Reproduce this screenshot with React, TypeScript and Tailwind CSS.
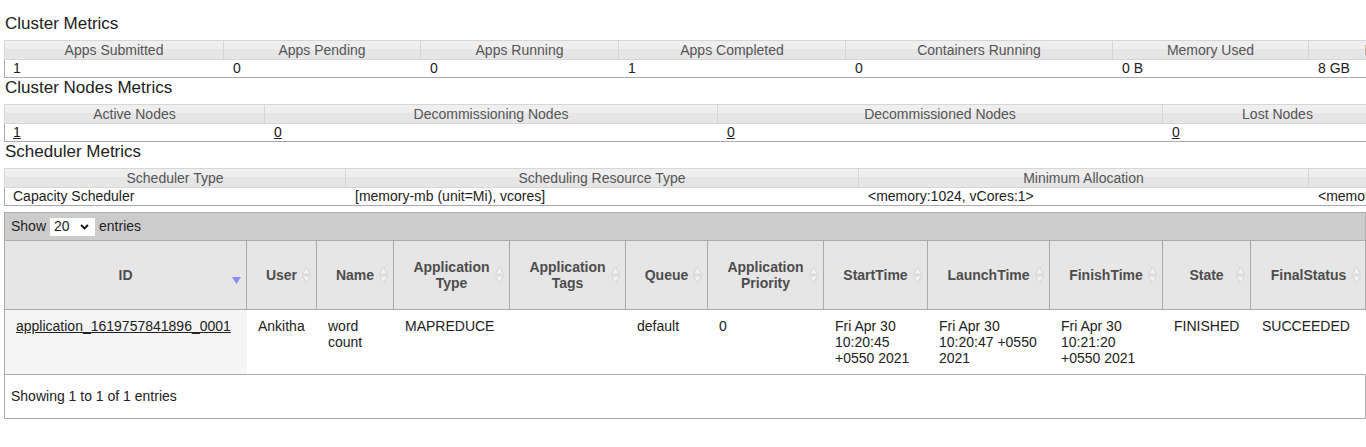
import React from "react";

type Col = { label: string; w: string; value: string; link?: boolean };

const clusterCols: Col[] = [
  { label: "Apps Submitted", w: "w-[220px]", value: "1" },
  { label: "Apps Pending", w: "w-[197px]", value: "0" },
  { label: "Apps Running", w: "w-[198px]", value: "0" },
  { label: "Apps Completed", w: "w-[227px]", value: "1" },
  { label: "Containers Running", w: "w-[267px]", value: "0" },
  { label: "Memory Used", w: "w-[196px]", value: "0 B" },
  { label: "Memory Total", w: "w-[196px]", value: "8 GB" },
  { label: "Memory Reserved", w: "w-[196px]", value: "0 B" },
  { label: "VCores Used", w: "w-[196px]", value: "0" },
];

const nodeCols: Col[] = [
  { label: "Active Nodes", w: "w-[261px]", value: "1", link: true },
  { label: "Decommissioning Nodes", w: "w-[453px]", value: "0", link: true },
  { label: "Decommissioned Nodes", w: "w-[445px]", value: "0", link: true },
  { label: "Lost Nodes", w: "w-[230px]", value: "0", link: true },
  { label: "Unhealthy Nodes", w: "w-[230px]", value: "0", link: true },
];

const schedCols: Col[] = [
  { label: "Scheduler Type", w: "w-[342px]", value: "Capacity Scheduler" },
  { label: "Scheduling Resource Type", w: "w-[513px]", value: "[memory-mb (unit=Mi), vcores]" },
  { label: "Minimum Allocation", w: "w-[450px]", value: "<memory:1024, vCores:1>" },
  { label: "Maximum Allocation", w: "w-[450px]", value: "<memory:8192, vCores:4>" },
];

function Heading({ children }: { children: React.ReactNode }) {
  return (
    <div className="h-[20px] leading-[20px] mb-[6px] text-[17px] text-[#222] pl-[1px]">{children}</div>
  );
}

function MetricTable({ cols }: { cols: Col[] }) {
  return (
    <div className="w-max">
      <div className="flex border-t border-b border-[#d6d6d6] bg-[linear-gradient(#efefef_45%,#e6e6e6_45%)]">
        {cols.map((c, i) => (
          <div
            key={i}
            className={`${c.w} h-[18px] leading-[18px] text-center text-[#555] border-r border-[#d6d6d6] ${i === 0 ? "border-l" : ""} whitespace-nowrap`}
          >
            {c.label}
          </div>
        ))}
      </div>
      <div className="flex border-b border-l border-[#aaa] bg-white">
        {cols.map((c, i) => (
          <div
            key={i}
            className={`${i === 0 ? "w-[219px]" : c.w} ${i === 0 ? c.w : ""} h-[17px] leading-[17px] pl-[8px] text-[#222] whitespace-nowrap`}
          >
            {c.link ? <span className="underline">{c.value}</span> : c.value}
          </div>
        ))}
      </div>
    </div>
  );
}

function SortBoth() {
  return (
    <svg width="9" height="17" viewBox="0 0 9 17" className="absolute right-[5px] top-1/2 -translate-y-1/2">
      <path d="M0.5 7.5 L4.5 0.5 L8.5 7.5 Z" fill="#f3f3f3" stroke="#d4d4d4" strokeWidth="1" />
      <path d="M0.5 9.5 L4.5 16.5 L8.5 9.5 Z" fill="#f3f3f3" stroke="#d4d4d4" strokeWidth="1" />
    </svg>
  );
}

function SortDesc() {
  return (
    <svg width="9" height="7" viewBox="0 0 9 7" className="absolute right-[5px] top-[36px]">
      <path d="M0 0 L9 0 L4.5 7 Z" fill="#8b8bf2" />
    </svg>
  );
}

const heads: { label: React.ReactNode; sorted?: boolean }[] = [
  { label: "ID", sorted: true },
  { label: "User" },
  { label: "Name" },
  { label: <>Application<br />Type</> },
  { label: <>Application<br />Tags</> },
  { label: "Queue" },
  { label: <>Application<br />Priority</> },
  { label: "StartTime" },
  { label: "LaunchTime" },
  { label: "FinishTime" },
  { label: "State" },
  { label: "FinalStatus" },
];

const row: React.ReactNode[] = [
  <span className="underline whitespace-nowrap">application_1619757841896_0001</span>,
  "Ankitha",
  "word count",
  "MAPREDUCE",
  "",
  "default",
  "0",
  "Fri Apr 30 10:20:45 +0550 2021",
  "Fri Apr 30 10:20:47 +0550 2021",
  "Fri Apr 30 10:21:20 +0550 2021",
  "FINISHED",
  "SUCCEEDED",
];

const gridCols =
  "grid grid-cols-[242px_70px_77px_116px_116px_82px_116px_104px_122px_113px_88px_115px]";

export default function App() {
  return (
    <div className="w-[1366px] h-[447px] overflow-hidden bg-white font-['Liberation_Sans',Arial,sans-serif] text-[14px] text-[#222] pt-[14px] pl-[4px]">
      <Heading>Cluster Metrics</Heading>
      <MetricTable cols={clusterCols} />
      <Heading>Cluster Nodes Metrics</Heading>
      <MetricTable cols={nodeCols} />
      <Heading>Scheduler Metrics</Heading>
      <MetricTable cols={schedCols} />

      <div className="mt-[6px] w-[1362px] border-l border-r border-b border-t border-[#aaa]">
        <div className="h-[27px] bg-[#cccccc] flex items-center pl-[6px] gap-[4px] text-[#222]">
          <span>Show</span>
          <div className="w-[45px] h-[18px] bg-white flex items-center pl-[4px] pr-[6px] justify-between">
            <span>20</span>
            <svg width="9" height="6" viewBox="0 0 9 6">
              <path d="M1 1 L4.5 4.5 L8 1" fill="none" stroke="#111" strokeWidth="1.8" />
            </svg>
          </div>
          <span>entries</span>
        </div>
        <div className={`${gridCols} h-[70px] border-t border-b border-[#aaa] bg-[#e6e6e6]`}>
          {heads.map((h, i) => (
            <div
              key={i}
              className={`relative flex items-center justify-center text-center font-bold text-[#4d4d4d] leading-[16px] ${i < heads.length - 1 ? "border-r border-[#aaa]" : ""}`}
            >
              <span>{h.label}</span>
              {h.sorted ? <SortDesc /> : <SortBoth />}
            </div>
          ))}
        </div>
        <div className={`${gridCols} h-[65px] border-b border-[#aaa]`}>
          {row.map((c, i) => (
            <div
              key={i}
              className={`pt-[8px] pl-[11px] pr-[10px] leading-[16px] text-[#222] ${i === 0 ? "bg-[#f5f5f5]" : "bg-white"}`}
            >
              {c}
            </div>
          ))}
        </div>
        <div className="h-[43px] flex items-center pl-[6px] text-[#222]">Showing 1 to 1 of 1 entries</div>
      </div>
    </div>
  );
}
